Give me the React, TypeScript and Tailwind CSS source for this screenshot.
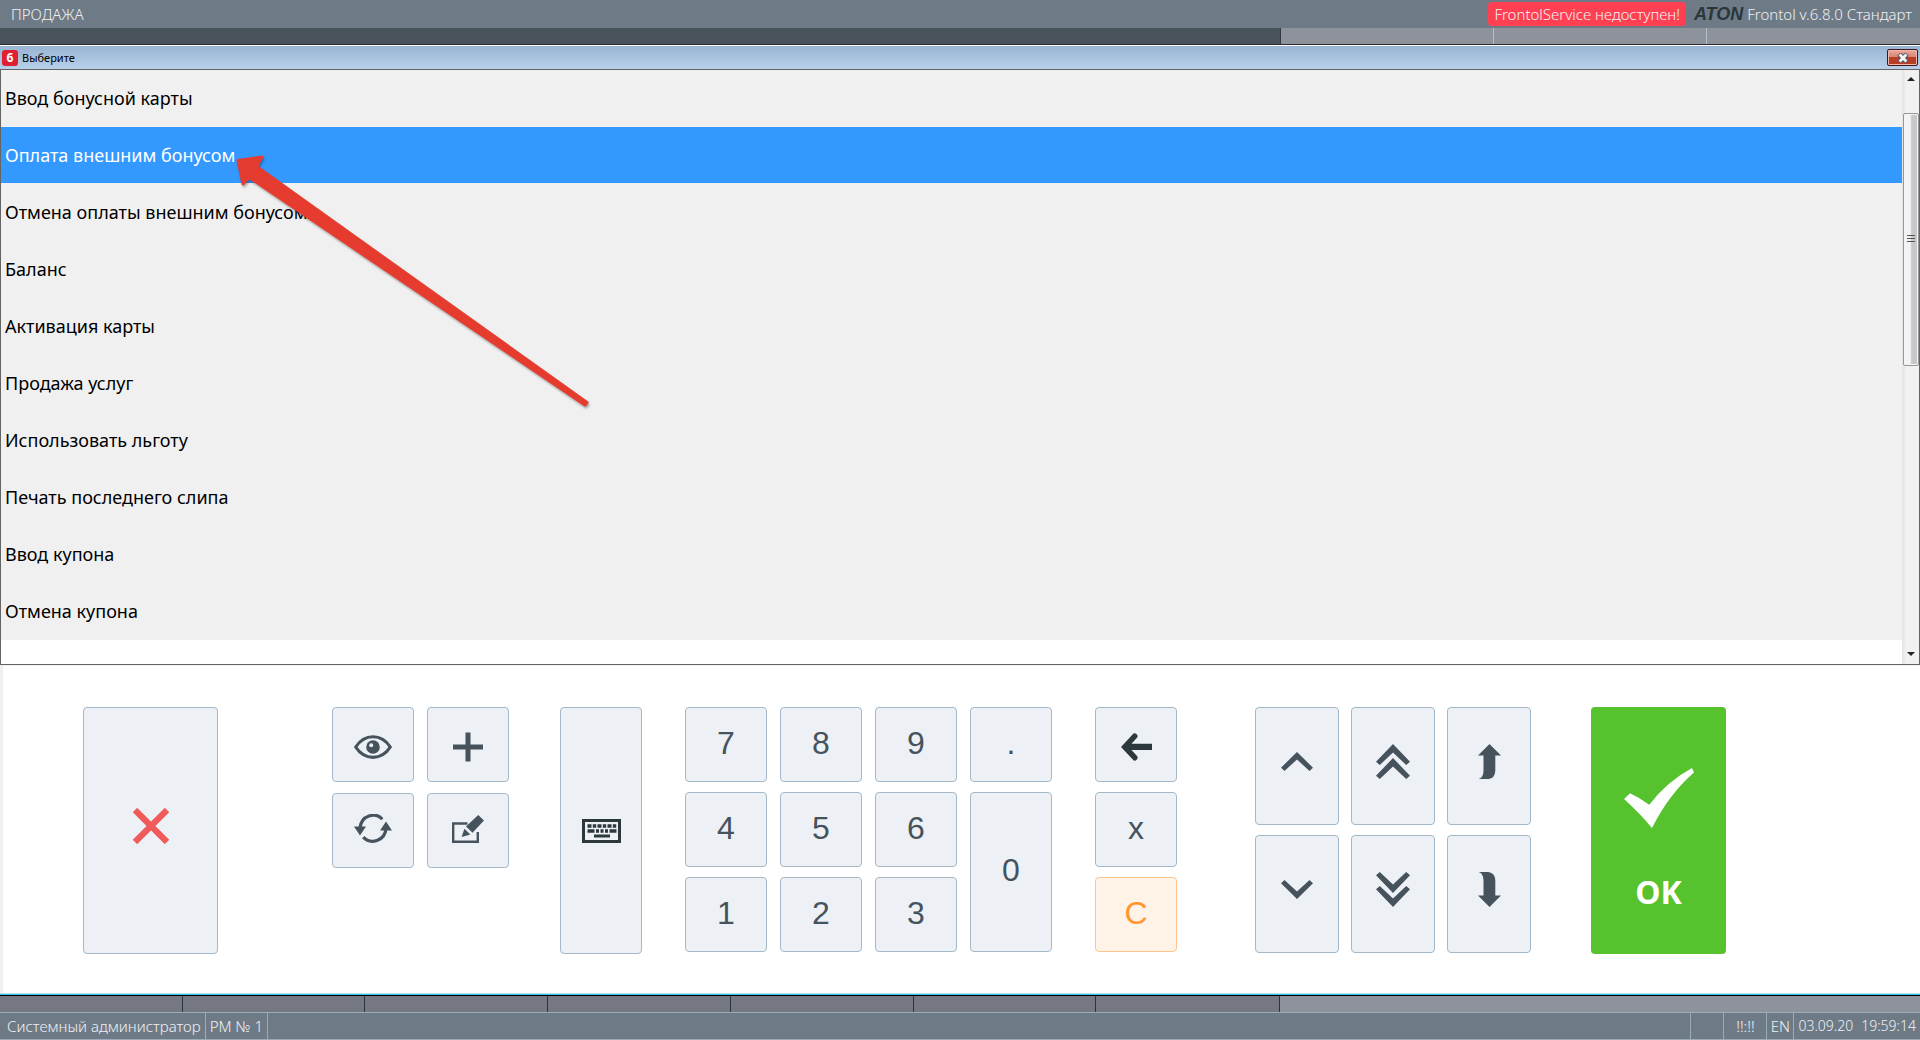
import { useState, type ReactNode } from "react";
import { clsx } from "clsx";

const operations = [
  "Ввод бонусной карты",
  "Оплата внешним бонусом",
  "Отмена оплаты внешним бонусом",
  "Баланс",
  "Активация карты",
  "Продажа услуг",
  "Использовать льготу",
  "Печать последнего слипа",
  "Ввод купона",
  "Отмена купона",
];

function Key({ label, className, children }: { label?: string; className?: string; children: ReactNode }) {
  return (
    <button
      type="button"
      aria-label={label}
      className={clsx(
        "flex items-center justify-center rounded border font-[Liberation_Sans,Arial,sans-serif] text-[32px] leading-8",
        typeof children === "string" && "pb-1",
        className ?? "border-[#a3b9c9] bg-[#edf1f5] text-[#46535d]"
      )}
    >
      {children}
    </button>
  );
}

function CrossIcon() {
  return (
    <svg width="36" height="36" viewBox="0 0 36 36" stroke="#f05a5a" strokeWidth="6.2">
      <path d="M2 2 34 34M34 2 2 34" />
    </svg>
  );
}

function EyeIcon() {
  return (
    <svg width="38" height="24" viewBox="0 0 38 24" fill="none">
      <path d="M1.700 12C10.500-1.700 27.500-1.700 36.300 12 27.500 25.700 10.500 25.700 1.700 12Z" stroke="#46535d" strokeWidth="3.200" strokeLinejoin="round" />
      <circle cx="19" cy="12" r="6.800" fill="#46535d" />
      <circle cx="17.200" cy="10.300" r="2" fill="#edf1f5" />
    </svg>
  );
}

function PlusIcon() {
  return (
    <svg width="30" height="30" viewBox="0 0 30 30" stroke="#46535d" strokeWidth="5">
      <path d="M15 .5v29M0 15h30" />
    </svg>
  );
}

function RefreshIcon() {
  return (
    <svg width="38" height="29" viewBox="0 0 38 29" fill="none" stroke="#46535d" strokeWidth="3.200">
      <path d="M6 14C7 1.500 21.500-2.500 28.300 5.200" />
      <path d="M32 14.500C31 27 16.500 31 9.200 23.200" />
      <path d="M0 12.500h12L6 21.500ZM38 16.500H26l6-9Z" fill="#46535d" stroke="none" />
    </svg>
  );
}

function EditIcon() {
  return (
    <svg width="32" height="28" viewBox="0 0 32 28" fill="none">
      <path d="M15.500 8.500H1.200v18.200h24.600V17" stroke="#46535d" strokeWidth="2.400" />
      <path d="M26.200 0 32 5.500 20.500 17.800 14 11.500ZM12.400 13.800l6 5.600-8.800 2.700Z" fill="#46535d" />
    </svg>
  );
}

function KeyboardIcon() {
  return (
    <svg width="39" height="24" viewBox="0 0 39 24" fill="none">
      <rect x="1.500" y="1.500" width="36" height="21" stroke="#2d383c" strokeWidth="3" />
      <path d="M5.500 7h29" stroke="#2d383c" strokeWidth="3.400" strokeDasharray="4 1.300 3.400 1.300" />
      <path d="M5.500 12h7M14 12h3M18.500 12h3M23 12h3M27.500 12h7" stroke="#2d383c" strokeWidth="3.400" />
      <path d="M12 17h16" stroke="#2d383c" strokeWidth="3" />
    </svg>
  );
}

function BackIcon() {
  return (
    <svg width="31" height="28" viewBox="0 0 31 28">
      <path d="M0 14 12.500.5q1.500-1 3.200.8 1.700 2 .3 3.500L10.500 10.700H31v6.300H10.500L16 23q1.500 1.700-.3 3.700-1.700 1.700-3.200.5Z" fill="#2d383c" />
    </svg>
  );
}

function ChevronIcon({ down }: { down?: boolean }) {
  return (
    <svg width="32" height="19" viewBox="0 0 32 19" fill="#46535d" className={down ? "rotate-180" : ""}>
      <path d="M0 15.700 16 0 32 15.700 28.500 19 16 7.500 3.500 19Z" />
    </svg>
  );
}

function DoubleChevronIcon({ down }: { down?: boolean }) {
  return (
    <svg width="34" height="35" viewBox="0 0 34 35" fill="#46535d" className={down ? "rotate-180" : ""}>
      <path d="M0 17.700 17 0 34 17.700 30.200 21 17 8.500 3.800 21Z" />
      <path d="M0 31.700 17 14 34 31.700 30.200 35 17 22.500 3.800 35Z" />
    </svg>
  );
}

function PageArrowIcon({ down }: { down?: boolean }) {
  return (
    <svg width="23" height="35" viewBox="0 0 23 35" fill="#46535d" className={down ? "-scale-y-100" : ""}>
      <path d="M11.500 0 23 11.500H17.300V27Q17 34 10.500 35H.7Q5.500 33.500 5.500 26.500V11.500H0Z" />
    </svg>
  );
}

function TopBar() {
  return (
    <header className="flex h-7 items-center justify-between bg-[#6e7b87] pr-2 pl-[11px] text-[15px] leading-5 font-light text-[#eef1f4]">
      <h1>ПРОДАЖА</h1>
      <div className="flex items-center">
        <span className="mr-2 rounded bg-[#ff4053] px-[6px] py-[2px]">FrontolService недоступен!</span>
        <span className="mr-1 font-[Liberation_Sans,Arial,sans-serif] text-lg leading-5 font-bold text-[#2a363c] italic">ATON</span>
        <span>Frontol v.6.8.0 Стандарт</span>
      </div>
    </header>
  );
}

function TitleBar() {
  return (
    <div className="flex h-6 items-center justify-between border-t border-white bg-linear-to-b from-[#98b4d2] to-[#b8d0ea] pr-[2px] pl-[2px]">
      <div className="flex items-center gap-1">
        <span className="flex size-4 items-center justify-center rounded-[3px] bg-[#e02030] text-xs leading-4 font-bold text-white">6</span>
        <h2 className="text-[11px] leading-4 text-black">Выберите</h2>
      </div>
      <button
        type="button"
        aria-label="Закрыть"
        className="flex h-[17px] w-[31px] items-center justify-center rounded-[2px] border border-[#431422] bg-linear-to-b from-[#eaa99d] from-0% via-[#d98574] via-48% to-[#c9604a] to-100% shadow-[inset_0_0_0_1px_#f0b8ac,inset_0_-8px_0_#b93e26]"
      >
        <svg width="12" height="10" viewBox="0 0 12 10" fill="none">
          <path d="M2 1 10 9M10 1 2 9" stroke="#535666" strokeWidth="4.800" />
          <path d="M2.600 1.600 9.400 8.400M9.400 1.600 2.600 8.400" stroke="#f6f6f6" strokeWidth="2.800" />
        </svg>
      </button>
    </div>
  );
}

function ScrollBar() {
  return (
    <div className="flex w-[17px] flex-col items-center bg-linear-to-r from-[#e3e3e3] to-[#f1f1f1] to-25%">
      <button type="button" aria-label="Вверх" className="flex h-[43px] w-full justify-center pt-[7px]">
        <svg width="8" height="4" viewBox="0 0 8 4" fill="#222"><path d="M4 0 8 4H0Z" /></svg>
      </button>
      <div className="flex h-[253px] w-4 items-center justify-center rounded-[2px] border border-[#979797] bg-linear-to-r from-[#f3f3f3] from-45% to-[#c8c8cc] to-55% pb-1 shadow-[inset_0_0_0_1px_#f4f4f4]">
        <svg width="8" height="8" viewBox="0 0 8 8" stroke="#555"><path d="M0 1.500h8M0 4.500h8M0 7.500h8" /></svg>
      </div>
      <button type="button" aria-label="Вниз" className="mt-auto flex h-4 w-full justify-center pt-1">
        <svg width="8" height="4" viewBox="0 0 8 4" fill="#222"><path d="M0 0h8L4 4Z" /></svg>
      </button>
    </div>
  );
}

function OperationList() {
  const [selected, setSelected] = useState(1);

  return (
    <section className="relative flex border border-[#646464] bg-white">
      <ul className="flex-1 pb-6">
        {operations.map((name, i) => (
          <li key={name} className="border-b border-[#f0f0f0]">
            <button
              type="button"
              onClick={() => setSelected(i)}
              className={clsx(
                "block h-14 w-full pl-1 text-left text-lg leading-6",
                i === selected ? "bg-[#3399ff] text-white" : "bg-[#f0f0f0] text-black"
              )}
            >
              {name}
            </button>
          </li>
        ))}
      </ul>
      <ScrollBar />
      <svg className="pointer-events-none absolute top-[84px] left-[231px] drop-shadow-[1px_2px_1px_rgba(0,0,0,0.3)]" width="360" height="256" viewBox="0 0 360 256">
        <path
          d="M6 6.500 30 3 24.500 12.500 355 248.500 353 251 17 23.300 11 30Z"
          fill="#e53c2f"
          stroke="#e53c2f"
          strokeWidth="3"
          strokeLinejoin="round"
        />
      </svg>
    </section>
  );
}

function KeyPanel() {
  return (
    <section className="flex items-start border-t border-l-[3px] border-[#f0f0f0] bg-white py-[41px]">
      <div className="grow-80" />
      <div className="grid h-[247px] w-[135px]">
        <Key label="Отмена"><span className="pb-[10px]"><CrossIcon /></span></Key>
      </div>
      <div className="grow-114" />
      <div className="grid h-[247px] w-[177px] grid-cols-2 grid-rows-3 gap-x-[13px] gap-y-[11px]">
        <Key label="Просмотр"><span className="pt-1"><EyeIcon /></span></Key>
        <Key label="Добавить"><span className="pt-1"><PlusIcon /></span></Key>
        <Key label="Обновить"><span className="pb-1"><RefreshIcon /></span></Key>
        <Key label="Изменить"><span className="pb-1"><EditIcon /></span></Key>
      </div>
      <div className="grow-51" />
      <div className="grid h-[247px] w-[82px]">
        <Key label="Клавиатура"><KeyboardIcon /></Key>
      </div>
      <div className="grow-43" />
      <div className="grid h-[245px] w-[367px] grid-cols-4 grid-rows-3 gap-x-[13px] gap-y-[10px]">
        <Key>7</Key>
        <Key>8</Key>
        <Key>9</Key>
        <Key>.</Key>
        <Key>4</Key>
        <Key>5</Key>
        <Key>6</Key>
        <Key className="row-span-2 border-[#a3b9c9] bg-[#edf1f5] text-[#46535d]">0</Key>
        <Key>1</Key>
        <Key>2</Key>
        <Key>3</Key>
      </div>
      <div className="grow-43" />
      <div className="grid h-[245px] w-[82px] grid-rows-3 gap-y-[10px]">
        <Key label="Стереть"><span className="pt-1"><BackIcon /></span></Key>
        <Key>x</Key>
        <Key className="border-[#ffc48c] bg-[#fff3e8] text-[#ff962d]">C</Key>
      </div>
      <div className="grow-78" />
      <div className="grid h-[246px] w-[276px] grid-cols-3 grid-rows-2 gap-x-3 gap-y-[10px]">
        <Key label="Строка вверх"><span className="pb-[10px]"><ChevronIcon /></span></Key>
        <Key label="Страница вверх"><span className="pb-[10px]"><DoubleChevronIcon /></span></Key>
        <Key label="В начало"><span className="pb-[10px]"><PageArrowIcon /></span></Key>
        <Key label="Строка вниз"><span className="pb-[10px]"><ChevronIcon down /></span></Key>
        <Key label="Страница вниз"><span className="pb-[10px]"><DoubleChevronIcon down /></span></Key>
        <Key label="В конец"><span className="pb-[10px]"><PageArrowIcon down /></span></Key>
      </div>
      <div className="grow-60" />
      <button type="button" className="flex h-[247px] w-[135px] flex-col items-center justify-center gap-12 rounded bg-[#56c22d] pt-[14px] text-white">
        <svg width="70" height="60" viewBox="0 0 70 60" fill="#fff">
          <path d="M0 31 6 25.300Q16 30 25.300 36.700 43 13.500 68 0L70 4.500Q45 26 28 60 16 45.500 0 31Z" />
        </svg>
        <span className="text-[32px] leading-8 font-bold">OK</span>
      </button>
      <div className="grow-194" />
    </section>
  );
}

function StatusBar() {
  return (
    <footer className="flex h-7 items-stretch border-y border-[#9aabbb] bg-[#6e7b87] text-[15px] leading-[26px] font-light text-[#eef1f4]">
      <span className="border-r border-[#9aabbb] pr-1 pl-[7px]">Системный администратор</span>
      <span className="border-r border-[#9aabbb] px-1">РМ № 1</span>
      <span className="ml-auto w-[33px] border-l border-[#9aabbb]" />
      <span className="w-[43px] border-l border-[#9aabbb] text-center">!!:!!</span>
      <span className="w-[27px] border-l border-[#9aabbb] text-center">EN</span>
      <span className="flex gap-2 border-l border-[#9aabbb] pr-1 pl-1 text-sm leading-[26px]">
        <span>03.09.20</span>
        <span>19:59:14</span>
      </span>
    </footer>
  );
}

export default function App() {
  return (
    <div className="flex min-h-screen flex-col bg-[#6e7b87] font-[Noto_Sans,Open_Sans,sans-serif]">
      <TopBar />
      <div className="flex h-[17px] border-b border-[#2c2c2c]">
        <div className="w-2/3 bg-[#48525b]" />
        <div className="grid w-1/3 grid-cols-3 divide-x divide-[#b3c1cd] border-l border-[#2f3840] bg-[#8e929a]">
          <div />
          <div />
          <div />
        </div>
      </div>
      <main>
        <TitleBar />
        <OperationList />
        <KeyPanel />
      </main>
      <div className="flex h-[17px] border-t border-black shadow-[0_-1px_0_#27c5e6,0_-2px_0_#c5dcec]">
        <div className="grid w-2/3 grid-cols-7 divide-x divide-[#2b343c] border-r border-[#2b343c] bg-[#757881]">
          <div />
          <div />
          <div />
          <div />
          <div />
          <div />
          <div />
        </div>
        <div className="flex-1 bg-[#8e929a]" />
      </div>
      <StatusBar />
    </div>
  );
}
